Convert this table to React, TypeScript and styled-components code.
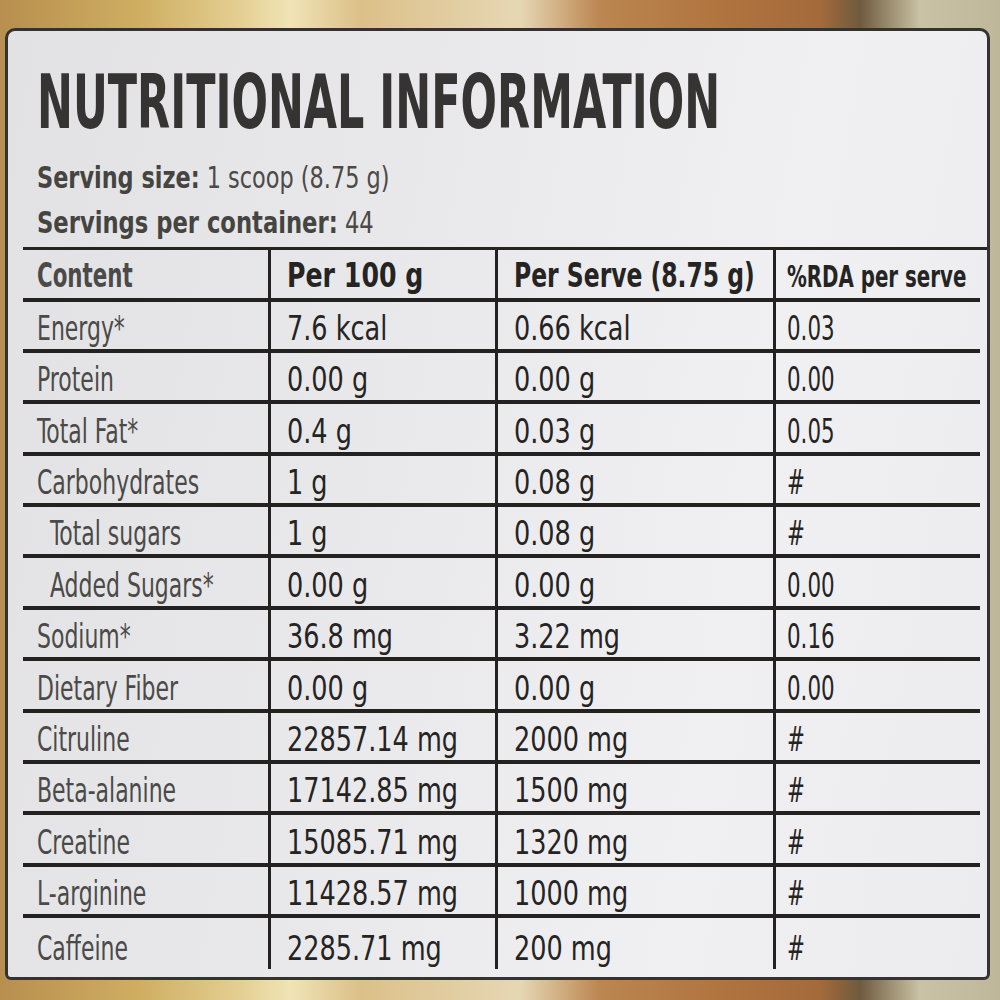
import { Fragment, ReactNode } from "react";
import styled, { createGlobalStyle } from "styled-components";

const GlobalStyles = createGlobalStyle`
  *{
    margin: 0;
    padding: 0;
    box-sizing: border-box;
  }
  body {
    width: 1000px;
    height: 1000px;
    overflow: hidden;
    font-family: "DejaVu Sans Condensed", "Liberation Sans", sans-serif;
  }
`;

type Row = {
  name: string;
  per100: string;
  perServe: string;
  rda: string;
  indent?: boolean;
};

const rows: Row[] = [
  { name: "Energy*", per100: "7.6 kcal", perServe: "0.66 kcal", rda: "0.03" },
  { name: "Protein", per100: "0.00 g", perServe: "0.00 g", rda: "0.00" },
  { name: "Total Fat*", per100: "0.4 g", perServe: "0.03 g", rda: "0.05" },
  { name: "Carbohydrates", per100: "1 g", perServe: "0.08 g", rda: "#" },
  { name: "Total sugars", per100: "1 g", perServe: "0.08 g", rda: "#", indent: true },
  { name: "Added Sugars*", per100: "0.00 g", perServe: "0.00 g", rda: "0.00", indent: true },
  { name: "Sodium*", per100: "36.8 mg", perServe: "3.22 mg", rda: "0.16" },
  { name: "Dietary Fiber", per100: "0.00 g", perServe: "0.00 g", rda: "0.00" },
  { name: "Citruline", per100: "22857.14 mg", perServe: "2000 mg", rda: "#" },
  { name: "Beta-alanine", per100: "17142.85 mg", perServe: "1500 mg", rda: "#" },
  { name: "Creatine", per100: "15085.71 mg", perServe: "1320 mg", rda: "#" },
  { name: "L-arginine", per100: "11428.57 mg", perServe: "1000 mg", rda: "#" },
  { name: "Caffeine", per100: "2285.71 mg", perServe: "200 mg", rda: "#" },
];

// the label wraps round a tub, so text near the edges is squeezed more
const colScale = [0.74, 0.86, 0.86, 0.72];
const headScale = [0.72, 0.85, 0.79, 0.71];

type EntryProps = {
  col: number;
  header?: boolean;
  last?: boolean;
  indent?: boolean;
  children: ReactNode;
};

function Entry({ col, header, last, indent, children }: EntryProps) {
  return (
    <Cell $col={col} $header={header} $last={last} $indent={indent}>
      <Squeeze $scale={header ? headScale[col] : colScale[col]}>{children}</Squeeze>
    </Cell>
  );
}

function App() {
  return (
    <Page>
      <GlobalStyles />
      <Label>
        <Title>
          <Squeeze $scale={0.645}>NUTRITIONAL INFORMATION</Squeeze>
        </Title>
        <Serving>
          <Squeeze $scale={0.83}>
            <b>Serving size:</b> 1 scoop (8.75 g)
          </Squeeze>
        </Serving>
        <Serving $gap={15}>
          <Squeeze $scale={0.84}>
            <b>Servings per container:</b> 44
          </Squeeze>
        </Serving>
        <Table>
          <Entry col={0} header>Content</Entry>
          <Entry col={1} header>Per 100 g</Entry>
          <Entry col={2} header>Per Serve (8.75 g)</Entry>
          <Entry col={3} header>%RDA per serve</Entry>
          {rows.map((r, i) => {
            const last = i === rows.length - 1;
            return (
              <Fragment key={r.name}>
                <Entry col={0} last={last} indent={r.indent}>{r.name}</Entry>
                <Entry col={1} last={last}>{r.per100}</Entry>
                <Entry col={2} last={last}>{r.perServe}</Entry>
                <Entry col={3} last={last}>{r.rda}</Entry>
              </Fragment>
            );
          })}
        </Table>
      </Label>
    </Page>
  );
}

export default App;

const Page = styled.div`
  width: 1000px;
  height: 1000px;
  overflow: hidden;
  padding: 28px 10px 20px 5px;
  background: linear-gradient(
    90deg,
    #b88f4e 0%,
    #cfae62 14%,
    #e4cf92 24%,
    #f0e4b6 29%,
    #dcc089 36%,
    #e6d7b4 52%,
    #bb8650 60%,
    #b0743f 72%,
    #a46a3a 82%,
    #6f5a3e 86%,
    #c9c2a4 92%,
    #bfb79a 100%
  );
`;

const Label = styled.section`
  height: 100%;
  overflow: hidden;
  border: 3px solid #353331;
  border-radius: 10px 10px 6px 6px;
  background: linear-gradient(
    100deg,
    #e2e2e4 0%,
    #e9e9eb 40%,
    #f0f0f2 72%,
    #ececee 100%
  );
  padding: 34px 0 0 15px;
`;

const Squeeze = styled.span<{ $scale: number }>`
  display: inline-block;
  transform: scaleX(${(p) => p.$scale});
  transform-origin: left bottom;
`;

const Title = styled.h1`
  margin-left: 14px;
  font-size: 74px;
  line-height: 74px;
  font-weight: 700;
  color: #353433;
  white-space: nowrap;
`;

const Serving = styled.p<{ $gap?: number }>`
  margin: ${(p) => p.$gap ?? 24}px 0 0 14px;
  font-size: 30px;
  line-height: 30px;
  color: #4b4a47;
  white-space: nowrap;
  b {
    font-weight: 700;
    color: #454441;
  }
`;

const Table = styled.div`
  margin-top: 9px;
  display: grid;
  grid-template-columns: 245px 227px 278px 207px;
  grid-auto-rows: 51.4px;
  border-top: 3px solid #262422;
`;

const padLeft = [14, 16, 16, 11];

const Cell = styled.div<{
  $col: number;
  $header?: boolean;
  $last?: boolean;
  $indent?: boolean;
}>`
  display: flex;
  align-items: flex-end;
  height: ${(p) => (p.$header ? 52 : 51.4)}px;
  padding: 0 0 ${(p) => (p.$header ? 6 : 4)}px
    ${(p) => padLeft[p.$col] + (p.$indent ? 13 : 0)}px;
  border-left: ${(p) => (p.$col > 0 ? "3px solid #242220" : "none")};
  border-bottom: ${(p) => (p.$last ? "none" : "4px solid #242220")};
  font-size: ${(p) => (p.$header && p.$col === 3 ? 31 : 33)}px;
  line-height: 1;
  font-weight: ${(p) => (p.$header ? 700 : 400)};
  color: ${(p) => (p.$col === 0 ? "#4b4a48" : "#252423")};
  white-space: nowrap;
`;
